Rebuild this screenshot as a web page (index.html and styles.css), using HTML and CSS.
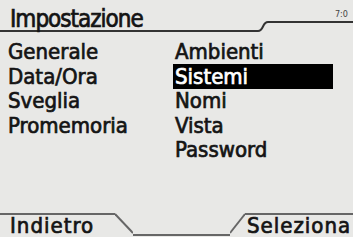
FILE: index.html
```html
<!DOCTYPE html>
<html lang="it">
<head>
    <meta charset="UTF-8">
    <meta name="viewport" content="width=device-width, initial-scale=1.0">
    <title>Impostazione</title>
    <link rel="stylesheet" href="styles.css">
</head>
<body>
    <div class="screen">
        <div class="header">
            <div class="title">Impostazione</div>
            <svg class="curve" width="10" height="32" viewBox="0 0 10 32">
                <path d="M0 31 C6 31 4 22 10 22" fill="none" stroke="#333" stroke-width="2"/>
            </svg>
            <div class="status">7:0</div>
        </div>

        <div class="menu">
            <div class="col">
                <div class="item">Generale</div>
                <div class="item">Data/Ora</div>
                <div class="item">Sveglia</div>
                <div class="item">Promemoria</div>
            </div>
            <div class="col right">
                <div class="item">Ambienti</div>
                <div class="item selected">Sistemi</div>
                <div class="item">Nomi</div>
                <div class="item">Vista</div>
                <div class="item">Password</div>
            </div>
        </div>

        <div class="softkeys">
            <div class="key left">Indietro</div>
            <svg class="slope" width="18" height="24" viewBox="0 0 18 24">
                <path d="M0 1 L18 20" fill="none" stroke="#666" stroke-width="2"/>
            </svg>
            <div class="gap"></div>
            <svg class="slope" width="15" height="24" viewBox="0 0 15 24">
                <path d="M0 20 L15 1" fill="none" stroke="#666" stroke-width="2"/>
            </svg>
            <div class="key right">Seleziona</div>
        </div>
    </div>
</body>
</html>
```

FILE: styles.css
```css
body {
    margin: 0;
    background: #e8e8e6;
}

.screen {
    width: 353px;
    height: 237px;
    overflow: hidden;
    background: #e8e8e6;
    color: #141414;
    font-family: "DejaVu Sans Condensed", "DejaVu Sans", sans-serif;
    font-stretch: condensed;
    -webkit-text-stroke: 0.7px #141414;
    display: flex;
    flex-direction: column;
}

.header {
    display: flex;
    align-items: flex-start;
    height: 32px;
}

.title {
    width: 258px;
    height: 32px;
    padding: 4px 0 0 10px;
    box-sizing: border-box;
    border-bottom: 2px solid #333;
    font-size: 24px;
    line-height: 30px;
    letter-spacing: -1px;
    white-space: nowrap;
}

.curve {
    display: block;
    flex: none;
}

.status {
    flex: 1;
    height: 23px;
    box-sizing: border-box;
    border-bottom: 2px solid #333;
    text-align: right;
    padding: 9px 5px 0 0;
    font-size: 9px;
    line-height: 10px;
    color: #444;
    -webkit-text-stroke: 0;
}

.menu {
    display: grid;
    grid-template-columns: 165px 160px;
    padding-left: 8px;
    margin-top: 8px;
}

.item {
    font-size: 22px;
    line-height: 24.5px;
    height: 24.5px;
    white-space: nowrap;
}

.right .item {
    padding-left: 2px;
}

.item.selected {
    background: #000;
    color: #fff;
    -webkit-text-stroke: 0.7px #fff;
    margin-top: -1px;
    padding-top: 1px;
}

.softkeys {
    margin-top: auto;
    display: flex;
    height: 24px;
    font-size: 22px;
    line-height: 22px;
    letter-spacing: 1px;
}

.key {
    box-sizing: border-box;
    height: 24px;
    border-top: 2px solid #666;
    white-space: nowrap;
}

.key.left {
    width: 115px;
    padding-left: 10px;
}

.key.right {
    width: 108px;
    padding-left: 2px;
}

.slope {
    display: block;
    flex: none;
}

.gap {
    flex: 1;
    height: 21px;
    border-bottom: 2px solid #666;
}
```
